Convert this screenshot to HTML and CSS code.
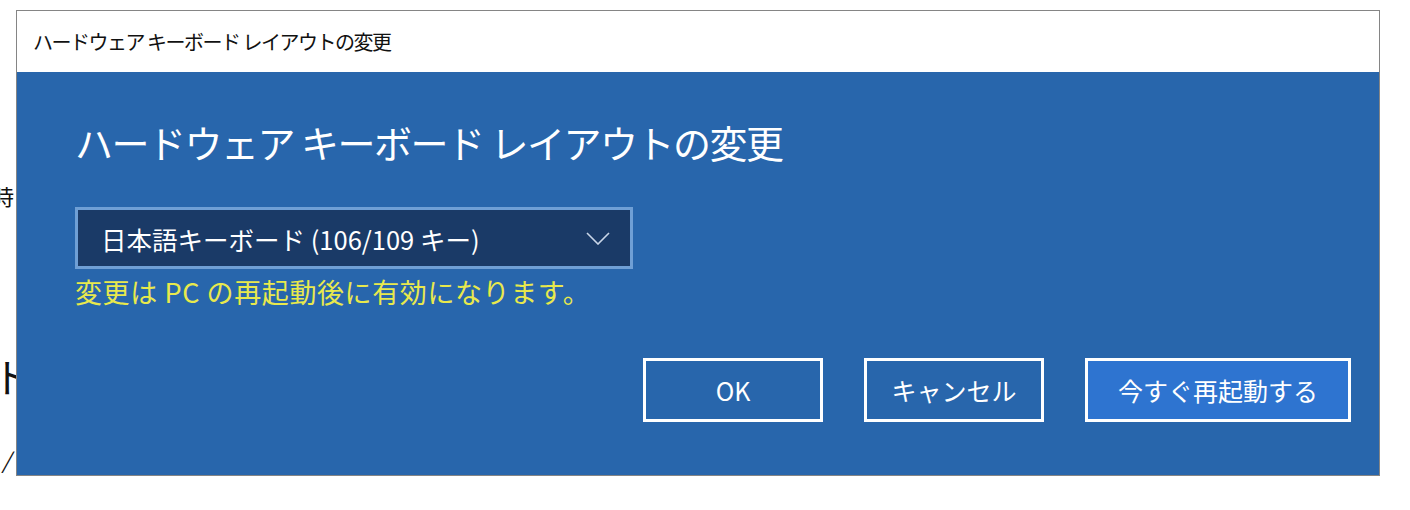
FILE: index.html
```html
<!DOCTYPE html>
<html lang="ja">
<head>
    <meta charset="UTF-8">
    <title>ハードウェア キーボード レイアウトの変更</title>
    <link rel="stylesheet" href="styles.css">
</head>
<body>
    <div class="desktop">
        <!-- settings page behind the dialog, only its left edge shows -->
        <div class="page-behind">
            <p class="behind-small">時</p>
            <p class="behind-big">ト</p>
            <p class="behind-slash">/</p>
        </div>

        <div class="dialog">
            <div class="titlebar">ハードウェア キーボード レイアウトの変更</div>
            <div class="dialog-body">
                <h1>ハードウェア キーボード レイアウトの変更</h1>

                <div class="layout-select">
                    <span>日本語キーボード (106/109 キー)</span>
                    <svg class="chevron" width="24" height="13" viewBox="0 0 24 13">
                        <polyline points="1,1 12,12 23,1" fill="none" stroke="#c9d6e8" stroke-width="1.6"/>
                    </svg>
                </div>
                <p class="notice">変更は PC の再起動後に有効になります。</p>

                <div class="buttons">
                    <button>OK</button>
                    <button>キャンセル</button>
                    <button class="primary">今すぐ再起動する</button>
                </div>
            </div>
        </div>
    </div>
</body>
</html>
```

FILE: styles.css
```css
body {
    margin: 0;
    background-color: white;
    font-family: "Noto Sans CJK JP", "Noto Sans", sans-serif;
    overflow: hidden;
}
.desktop {
    position: relative;
    width: 1410px;
    height: 510px;
}
.page-behind {
    color: #111;
    margin-left: -8px;
}
.page-behind p {
    margin: 0;
}
.behind-small {
    padding-top: 178px;
    font-size: 22px;
    line-height: 34px;
}
.behind-big {
    margin-top: 140px !important;
    font-size: 40px;
    line-height: 48px;
}
.behind-slash {
    margin-top: 46px !important;
    margin-left: 10px !important;
    font-size: 22px;
    line-height: 26px;
    font-style: italic;
}
.dialog {
    position: absolute;
    left: 16px;
    top: 10px;
    width: 1362px;
    height: 464px;
    border: 1px solid #858585;
    display: flex;
    flex-direction: column;
    background-color: #2866ac;
}
.titlebar {
    height: 61px;
    background-color: white;
    display: flex;
    align-items: center;
    padding-left: 16px;
    font-size: 20px;
    letter-spacing: -1.5px;
    color: #111;
}
.dialog-body {
    flex: 1;
    padding: 0 28px 0 58px;
    color: white;
}
h1 {
    margin: 46px 0 0;
    font-size: 38px;
    line-height: 48px;
    font-weight: normal;
    letter-spacing: -1.5px;
}
.layout-select {
    margin-top: 41px;
    height: 56px;
    border: 3px solid #6f9fd5;
    background-color: #1a3a67;
    display: flex;
    align-items: center;
    justify-content: space-between;
    padding: 0 20px 0 23px;
    box-sizing: content-box;
    width: 509px;
    font-size: 25.5px;
}
.chevron {
    display: block;
}
.notice {
    margin: 5px 0 0;
    color: #e8e94c;
    font-size: 27px;
    letter-spacing: 0.6px;
    line-height: 36px;
}
.buttons {
    margin-top: 48px;
    display: flex;
    justify-content: flex-end;
    gap: 41px;
}
button {
    width: 180px;
    height: 64px;
    border: 3px solid white;
    background-color: transparent;
    color: white;
    font-family: inherit;
    font-size: 25px;
    padding: 0;
}
button.primary {
    width: 266px;
    background-color: #2e74d0;
}
```
